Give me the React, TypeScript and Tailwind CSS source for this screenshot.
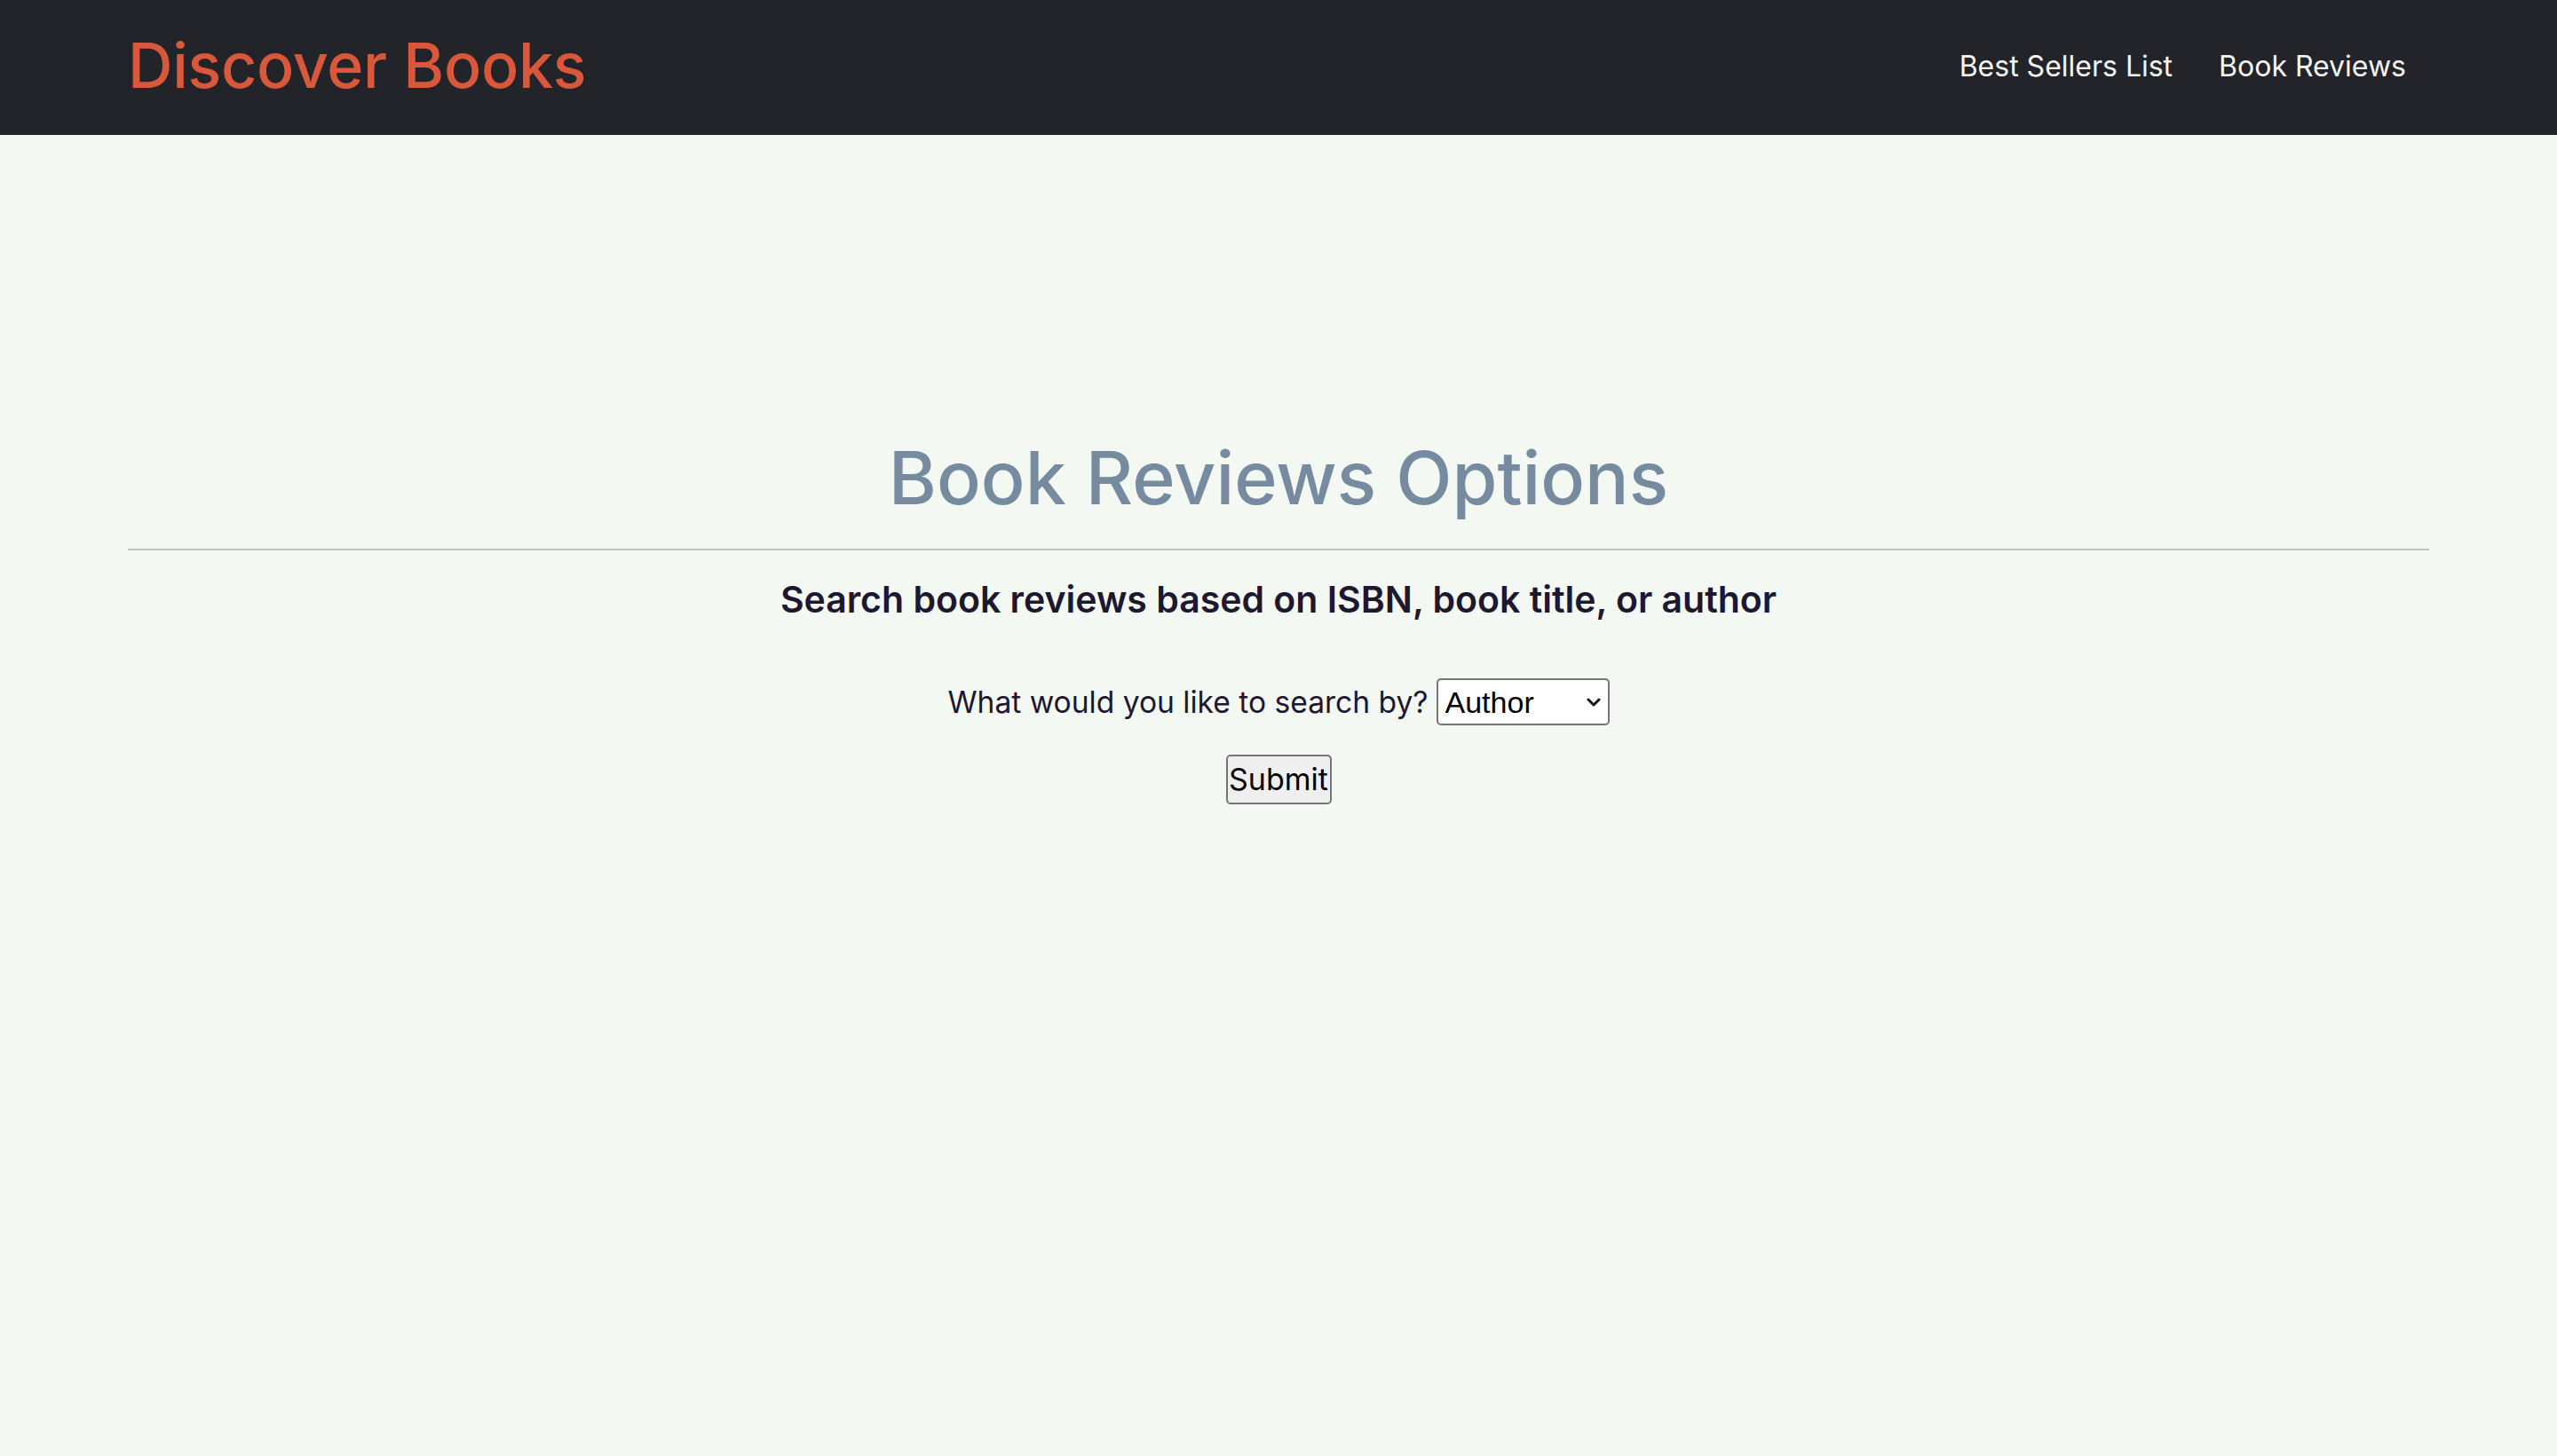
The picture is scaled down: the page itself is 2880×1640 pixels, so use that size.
import { useState } from 'react'

const NAV_LINKS = ['Best Sellers List', 'Book Reviews']

export default function App() {
  const [searchBy, setSearchBy] = useState('author')

  return (
    <div className="min-h-screen bg-[#f4f8f3] font-['Inter',sans-serif]">
      {/* Header */}
      <header className="h-[152px] bg-[#222429] px-[144px] flex items-center justify-between">
        <a href="#" className="-mt-[4px] text-[70px] font-medium text-[#d9573a] tracking-[-0.3px] leading-none">
          Discover Books
        </a>
        <nav className="-mt-[3px] flex items-center gap-[52px] pr-[26px]">
          {NAV_LINKS.map(link => (
            <a key={link} href="#" className="text-[32px] text-[#f5f5f5] leading-none">
              {link}
            </a>
          ))}
        </nav>
      </header>

      <main className="w-[90%] mx-auto text-center">
        <h1 className="mt-[337px] text-[82.5px] leading-[1.2] font-medium text-[#768ba0]">
          Book Reviews Options
        </h1>
        <hr className="mt-[30px] border-0 h-[2px] bg-[#c0c2c0]" />
        <h3 className="mt-[31px] text-[41px] leading-[1.2] font-semibold text-[#1d1730]">
          Search book reviews based on ISBN, book title, or author
        </h3>

        <form className="mt-[64px] flex flex-col items-center" onSubmit={e => e.preventDefault()}>
          <div className="flex items-center gap-[9px]">
            <label htmlFor="searchBy" className="text-[33.6px] leading-[1.2] text-[#1d1730]">
              What would you like to search by?
            </label>
            <div className="relative">
              <select
                id="searchBy"
                value={searchBy}
                onChange={e => setSearchBy(e.target.value)}
                className="appearance-none block w-[195px] h-[53px] border-2 border-[#767676] rounded-[5px] bg-white pl-[8px] pr-[30px] text-[34px] text-black font-['Liberation_Sans',sans-serif]"
              >
                <option value="isbn">ISBN</option>
                <option value="title">Title</option>
                <option value="author">Author</option>
              </select>
              <svg
                className="pointer-events-none absolute right-[10px] top-[22px] w-[16px] h-[10px]"
                viewBox="0 0 16 10"
                fill="none"
                stroke="#111"
                strokeWidth="3"
                strokeLinecap="round"
                strokeLinejoin="round"
              >
                <path d="M2 2l6 6 6-6" />
              </svg>
            </div>
          </div>
          <button
            type="submit"
            className="mt-[33px] w-[119px] h-[56px] border-2 border-[#767676] rounded-[5px] bg-[#efefef] text-[34px] text-black leading-none"
          >
            Submit
          </button>
        </form>
      </main>
    </div>
  )
}
